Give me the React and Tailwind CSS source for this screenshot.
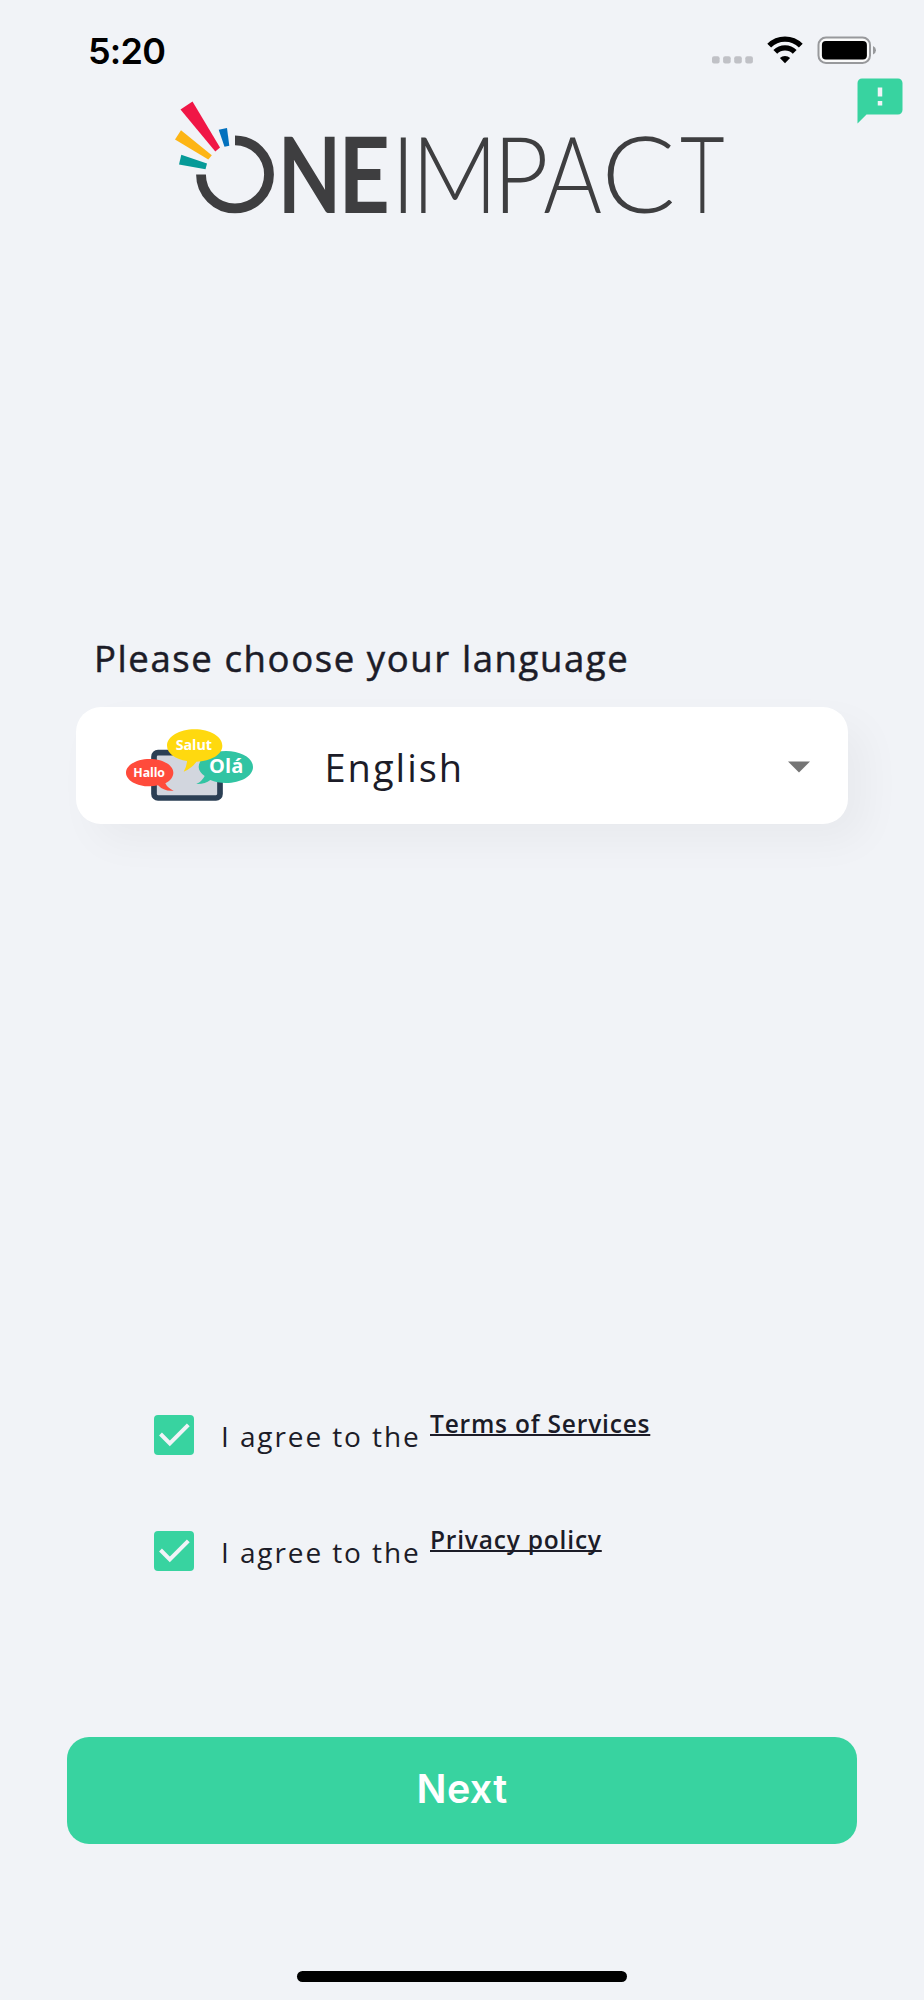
import { MdFeedback } from "react-icons/md";

function StatusBar() {
  return (
    <header className="flex h-[74px] shrink-0 items-start justify-between pl-[88px] pr-[48px] pt-[30px]">
      <span className="font-['Inter',sans-serif] text-[36px] font-semibold leading-[42px] tracking-[-0.8px] text-black">5:20</span>
      <div className="flex items-start pt-[6px]">
        <svg className="mt-[20px] h-[8px] w-[42px]" viewBox="0 0 42 8" fill="#c0c1c6">
          <rect x="0" y="0.3" width="7.6" height="7.2" rx="2" />
          <rect x="11.1" y="0.3" width="7.6" height="7.2" rx="2" />
          <rect x="22.2" y="0.3" width="7.6" height="7.2" rx="2" />
          <rect x="33.3" y="0.3" width="7.6" height="7.2" rx="2" />
        </svg>
        <svg className="ml-[13px] h-[28px] w-[36px]" viewBox="0 0 36 28" fill="none" stroke="#000">
          <path d="M2.2 9.6a22.5 22.5 0 0 1 31.6 0" strokeWidth="5.4" />
          <path d="M8.3 15.9a13.8 13.8 0 0 1 19.4 0" strokeWidth="5.4" />
          <path d="M18 27.2L12.9 22a7.3 7.3 0 0 1 10.2 0z" fill="#000" stroke="none" />
        </svg>
        <svg className="ml-[14px] h-[30px] w-[59px]" viewBox="0 0 59 30">
          <rect x="1.5" y="1.5" width="51.5" height="25.5" rx="7.5" fill="#fafafa" stroke="#98999c" strokeWidth="2" />
          <rect x="4.9" y="5" width="45" height="18.6" rx="4" fill="#000" />
          <path d="M56 10q3 1.5 3 4.3t-3 4.3z" fill="#98999c" />
        </svg>
      </div>
    </header>
  );
}

function Logo() {
  return (
    <svg className="h-[180px] w-[580px]" viewBox="170 74 580 180" fill="#3e3e40" fontFamily="Lato, sans-serif" fontSize="107">
      <path d="M180.5 109.5L192.5 101.5L220 147.5L215.3 151.5Z" fill="#f01646" />
      <path d="M181 130.2L211.8 155.2L208.3 159.5L175 139.5Z" fill="#fdb515" />
      <path d="M181.3 154.8L207 163.5L205.5 169.2L179 164.5Z" fill="#069a98" />
      <path d="M218.7 129.7L227 128L229.3 145.8L224.5 146.8Z" fill="#0371be" />
      <path d="M235 140.4A34 34 0 1 1 201 174.4" fill="none" stroke="#3e3e40" strokeWidth="9.8" />
      <g fontWeight="700">
        <text transform="translate(277.8 213) scale(.77 .99)">N</text>
        <text transform="translate(338.3 213) scale(.84 .99)">E</text>
      </g>
      <g fontWeight="300">
        <text transform="translate(390.8 213) scale(.9 1)">I</text>
        <text transform="translate(411.2 213) scale(.893 1)">M</text>
        <text transform="translate(492.8 213) scale(.905 1)">P</text>
        <text transform="translate(543.2 213) scale(.838 1)">A</text>
        <text transform="translate(601.3 213) scale(1.03 1)">C</text>
        <text transform="translate(680 213) scale(.72 1)">T</text>
      </g>
    </svg>
  );
}

function LanguageArt() {
  return (
    <svg className="h-[90px] w-[160px]" viewBox="0 0 480 270" fontFamily="Open Sans, sans-serif" fontWeight="700" fill="#fff">
      <rect x="132" y="98" width="198" height="136" rx="12" fill="#d2d6de" stroke="#2b3f54" strokeWidth="17" />
      <path d="M348 93c45 0 81 21 81 48s-36 48-81 48c-18 0-34-3-47-9q-16 13-42 12q18-9 25-24c-11-8-18-17-18-27c0-27 36-48 82-48z" fill="#31c4a3" />
      <path d="M254 28c46 0 83 22 83 49s-34 46-78 48q-12 19-38 30q10-18 10-32c-34-5-60-23-60-46c0-27 37-49 83-49z" fill="#ffd90f" />
      <path d="M119 117c39 0 71 18 71 41c0 13-9 24-24 32q7 15 25 22q-29 3-47-16q-12 3-25 3c-39 0-71-18-71-41s32-41 71-41z" fill="#ff4b3b" />
      <text x="70" y="170" fontSize="37" textLength="95">Hallo</text>
      <text x="197" y="90" fontSize="43" textLength="109">Salut</text>
      <text x="297" y="160" fontSize="60" textLength="103">Olá</text>
    </svg>
  );
}

function Agreement({ link }) {
  return (
    <label className="flex h-[116px] items-start">
      <span className="flex size-[40px] shrink-0 rounded-[4px] bg-[#38d3a0]">
        <svg className="size-[40px]" viewBox="0 0 40 40" fill="none" stroke="#f1f3f7" strokeWidth="4">
          <path d="M6.5 19L15.8 28.4L34.3 9.8" />
        </svg>
      </span>
      <span className="ml-[27px] mt-[2px] w-[202px] whitespace-nowrap text-[28px] leading-[38px] tracking-[1.9px]">I agree to the</span>
      <a className="ml-[7px] -mt-[8px] whitespace-nowrap text-[24.5px] font-semibold leading-[34px] tracking-[0.8px] underline decoration-2 underline-offset-[1px] [text-decoration-skip-ink:none]">{link}</a>
    </label>
  );
}

export default function App() {
  return (
    <main className="flex h-[2000px] w-[924px] flex-col bg-[#f1f3f7] font-['Open_Sans',sans-serif] text-[#1c1c28]">
      <StatusBar />
      <div className="flex h-[180px] shrink-0 items-start justify-between pl-[170px] pr-[17.5px]">
        <Logo />
        <MdFeedback className="size-[54px] text-[#38d3a0]" />
      </div>
      <section className="mt-[375px] px-[76px]">
        <h1 className="h-[78px] whitespace-nowrap pl-[18px] text-[36.5px] leading-[59px] tracking-[1.6px] [-webkit-text-stroke:0.5px_#1c1c28]">
          Please choose your language
        </h1>
        <div className="flex h-[117px] items-center rounded-[25px] bg-white shadow-[18px_18px_40px_rgba(0,0,0,0.04)]">
          <div className="ml-[34px] h-[91px]"><LanguageArt /></div>
          <span className="ml-[54.5px] mt-[3px] text-[38px] tracking-[2px]">English</span>
          <svg className="ml-auto mr-[37px] mt-[2px] h-[12px] w-[24px]" viewBox="0 0 24 12"><path d="M1 .5h22L12 11.5z" fill="#757575" /></svg>
        </div>
      </section>
      <section className="mt-[591px] h-[322px] shrink-0 pl-[154px]">
        <Agreement link="Terms of Services" />
        <Agreement link="Privacy policy" />
      </section>
      <button className="mx-[67px] h-[107px] shrink-0 rounded-[22px] bg-[#38d3a0] pb-[2px] font-['Inter',sans-serif] text-[39.5px] font-semibold tracking-[0.3px] text-white">Next</button>
      <div className="mx-auto mt-[127px] h-[11px] w-[330px] shrink-0 rounded-full bg-black" />
    </main>
  );
}
